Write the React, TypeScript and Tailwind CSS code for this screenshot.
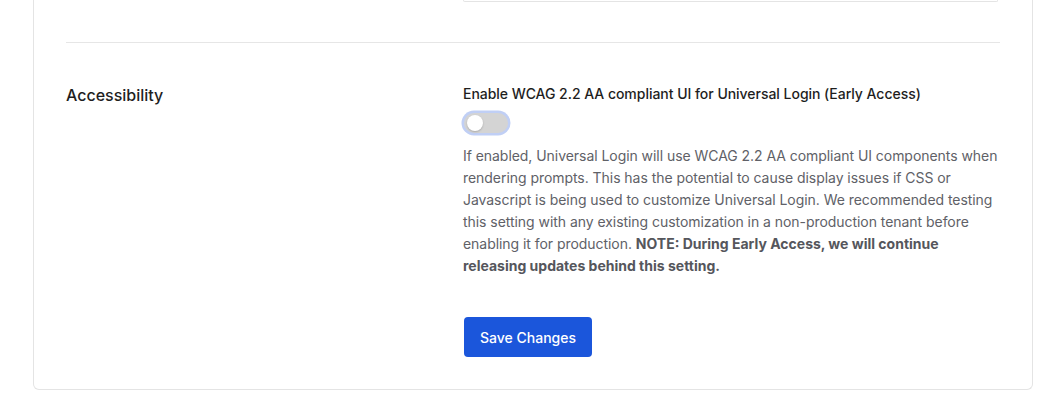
import { useState } from "react";

export default function App() {
  const [enabled, setEnabled] = useState(false);

  return (
    <div className="min-h-screen bg-white pl-[33px] font-['Inter',sans-serif]">
      <div className="w-[1000px] rounded-b-[6px] border-x border-b border-[#e4e4e4] pr-[32px] pb-[32px] pl-[32px]">
        {/* Tail of the previous section */}
        <div className="grid grid-cols-[397px_1fr]">
          <div />
          <div className="mr-[2px] h-[2px] rounded-b-[6px] border-x border-b border-[#e4e4e4]" />
        </div>

        <div className="mt-[40px] border-t border-[#e6e6e6]" />

        {/* Accessibility section */}
        <div className="grid grid-cols-[397px_1fr] pt-[41px]">
          <h2 className="pt-[1px] text-[16px] leading-[20px] font-medium text-[#1e1e1e]">Accessibility</h2>

          <div className="flex flex-col items-start">
            <label className="text-[14px] leading-[20px] font-medium tracking-[-0.03px] text-[#1e1e1e]">
              Enable WCAG 2.2 AA compliant UI for Universal Login (Early Access)
            </label>

            <button
              role="switch"
              aria-checked={enabled}
              onClick={() => setEnabled(!enabled)}
              className={`mt-[9px] ml-[1px] flex h-[20px] w-[44px] items-center rounded-full px-[3px] ring-[2.5px] ring-[#c0cff5] ${
                enabled ? "justify-end bg-[#1b56db]" : "justify-start bg-[#d4d4d4]"
              }`}
            >
              <span className="h-[16px] w-[16px] rounded-full bg-white shadow-[0_1px_2px_rgba(0,0,0,0.2)]" />
            </button>

            <p className="mt-[12px] text-[14px] leading-[22px] tracking-[-0.05px] text-[#606167]">
              If enabled, Universal Login will use WCAG 2.2 AA compliant UI components when rendering prompts. This has
              the potential to cause display issues if CSS or Javascript is being used to customize Universal Login. We
              recommended testing this setting with any existing customization in a non-production tenant before
              enabling it for production.{" "}
              <strong className="font-bold tracking-normal text-[#55565c]">
                NOTE: During Early Access, we will continue releasing updates behind this setting.
              </strong>
            </p>

            <button className="mt-[40px] ml-[1px] h-[40px] rounded-[4px] bg-[#1b56db] px-[16px] text-[14px] font-medium text-white">
              Save Changes
            </button>
          </div>
        </div>
      </div>
    </div>
  );
}
